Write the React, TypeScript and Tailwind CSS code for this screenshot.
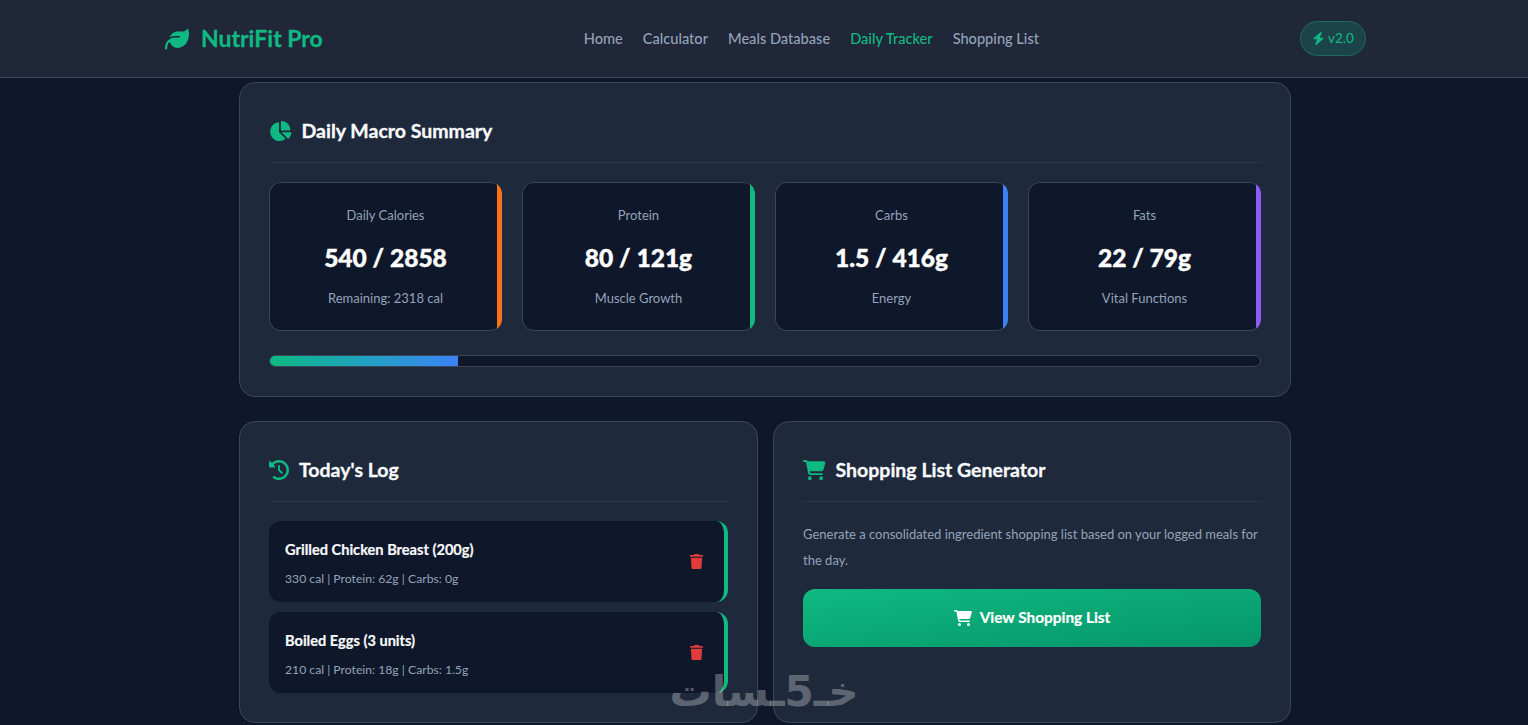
import { FaBolt, FaCartShopping, FaChartPie, FaClockRotateLeft, FaLeaf, FaTrash } from 'react-icons/fa6'
import type { ReactNode } from 'react'

const navLinks = ['Home', 'Calculator', 'Meals Database', 'Daily Tracker', 'Shopping List']

const stats = [
  { label: 'Daily Calories', value: '540 / 2858', note: 'Remaining: 2318 cal', bar: 'bg-[#f97316]' },
  { label: 'Protein', value: '80 / 121g', note: 'Muscle Growth', bar: 'bg-[#10b981]' },
  { label: 'Carbs', value: '1.5 / 416g', note: 'Energy', bar: 'bg-[#3b82f6]' },
  { label: 'Fats', value: '22 / 79g', note: 'Vital Functions', bar: 'bg-[#8b5cf6]' },
]

const logItems = [
  { name: 'Grilled Chicken Breast (200g)', info: '330 cal | Protein: 62g | Carbs: 0g' },
  { name: 'Boiled Eggs (3 units)', info: '210 cal | Protein: 18g | Carbs: 1.5g' },
]

function Card({ icon, title, className, children }: { icon: ReactNode; title: string; className: string; children: ReactNode }) {
  return (
    <section className={`rounded-2xl border border-[#3a4658] bg-[#1e293b] ${className}`}>
      <div className="flex h-[80px] items-center gap-[10px] border-b border-[#2c384a] pt-[32px] pb-[16px] text-[#10b981]">
        {icon}
        <h2 className="text-[19.5px] font-bold text-[#f8fafc] [-webkit-text-stroke:0.3px]">{title}</h2>
      </div>
      {children}
    </section>
  )
}

export default function App() {
  return (
    <div className="relative h-[725px] overflow-hidden bg-[#0f172a] font-['Lato','Noto_Sans',sans-serif]">
      <header className="flex h-[78px] items-center justify-between border-b border-[#414b5d] bg-[#1f2739] pr-[162px] pl-[165px]">
        <div className="flex items-center gap-[12px] text-[#10b981]">
          <FaLeaf className="text-[24px]" />
          <span className="text-[23px] font-bold [-webkit-text-stroke:0.3px]">NutriFit Pro</span>
        </div>
        <nav className="flex gap-[20px] text-[14.6px] font-medium text-[#94a3b8]">
          {navLinks.map((link) => (
            <a key={link} className={link === 'Daily Tracker' ? 'text-[#10b981]' : ''}>
              {link}
            </a>
          ))}
        </nav>
        <div className="flex h-[35px] w-[66px] items-center justify-center gap-[3px] rounded-full border border-[#1f6a5c] bg-[#1b4349] text-[13.5px] text-[#10b981]">
          <FaBolt className="text-[13px]" />
          v2.0
        </div>
      </header>

      <main className="mt-[4px] ml-[239px] flex w-[1052px] flex-col gap-[24px]">
        <Card icon={<FaChartPie className="h-[20px] w-[22.5px]" />} title="Daily Macro Summary" className="h-[315px] px-[29px]">
          <div className="mt-[19px] grid grid-cols-4 gap-[20px]">
            {stats.map((stat) => (
              <div
                key={stat.label}
                className="relative flex h-[149px] flex-col items-center overflow-hidden rounded-xl bg-[#0f172a] pt-[25px] shadow-[inset_0_0_0_1px_#3a4658]"
              >
                <span className={`absolute top-0 right-0 bottom-0 w-[5px] ${stat.bar}`} />
                <span className="text-[13px] leading-[17px] text-[#94a3b8]">{stat.label}</span>
                <span className="mt-[18px] text-[24.5px] leading-[32px] font-black text-white [-webkit-text-stroke:0.4px]">{stat.value}</span>
                <span className="mt-[16px] text-[13px] leading-[17px] text-[#94a3b8]">{stat.note}</span>
              </div>
            ))}
          </div>
          <div className="mt-[24px] h-[12px] overflow-hidden rounded-full border border-[#3a4658] bg-[#0f172a]">
            <div className="h-full w-[19%] bg-gradient-to-r from-[#10b981] to-[#3b82f6]" />
          </div>
        </Card>

        <div className="grid grid-cols-[519px_518px] gap-[15px]">
          <Card icon={<FaClockRotateLeft className="text-[20px]" />} title="Today's Log" className="h-[302px] px-[29px]">
            <div className="mt-[19px] flex flex-col gap-[10px]">
              {logItems.map((item) => (
                <div
                  key={item.name}
                  className="flex h-[81px] items-center justify-between rounded-xl border-r-[4px] border-[#10b981] bg-[#0f172a] pt-[4px] pr-[20px] pl-[16px]"
                >
                  <div>
                    <div className="text-[14.6px] leading-[18px] font-bold text-[#f8fafc] [-webkit-text-stroke:0.2px]">{item.name}</div>
                    <div className="mt-[12px] text-[12.2px] leading-[16px] text-[#94a3b8]">{item.info}</div>
                  </div>
                  <FaTrash className="-mt-[4px] text-[15px] text-[#e03c3c]" />
                </div>
              ))}
            </div>
          </Card>

          <Card icon={<FaCartShopping className="h-[20px] w-[22.5px]" />} title="Shopping List Generator" className="h-[302px] px-[29px]">
            <p className="mt-[19px] text-[13px] leading-[26px] text-[#94a3b8]">
              Generate a consolidated ingredient shopping list based on your logged meals for the day.
            </p>
            <button className="mt-[16px] flex h-[58px] w-full items-center justify-center gap-[8px] rounded-xl bg-gradient-to-br from-[#10b981] to-[#059669] text-[15.4px] font-bold text-white [-webkit-text-stroke:0.2px]">
              <FaCartShopping className="h-[16px] w-[18px]" />
              View Shopping List
            </button>
          </Card>
        </div>
      </main>

      {/* site watermark */}
      <div
        dir="rtl"
        className="absolute top-[662px] left-[664px] w-[200px] text-center font-['DejaVu_Sans',sans-serif] text-[42px] leading-[60px] font-bold text-white/30"
      >
        خـ5ـسات
      </div>
    </div>
  )
}
